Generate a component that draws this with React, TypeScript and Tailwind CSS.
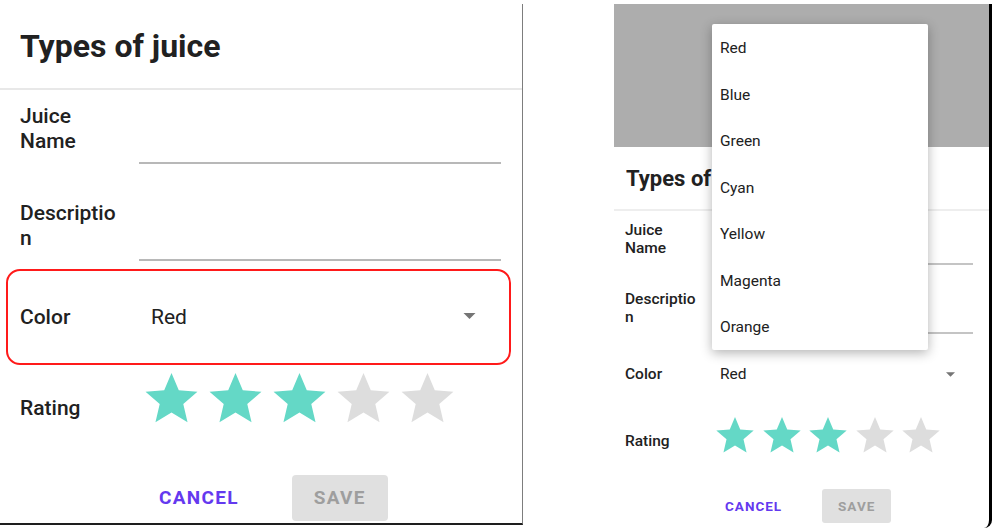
import React from "react";

const STAR_PATH =
  "M12 17.27L18.18 21l-1.64-7.03L22 9.24l-7.19-.61L12 2 9.19 8.63 2 9.24l5.46 4.73L5.82 21z";

const COLORS = ["Red", "Blue", "Green", "Cyan", "Yellow", "Magenta", "Orange"];

const Star = ({ on, className }: { on: boolean; className: string }) => (
  <svg viewBox="2 2 20 19.27" className={className}>
    <path d={STAR_PATH} fill={on ? "#64d8c6" : "#dddddd"} />
  </svg>
);

const Caret = ({ className }: { className: string }) => (
  <svg viewBox="0 0 10 5" className={className}>
    <polygon points="0,0 10,0 5,5" fill="#757575" />
  </svg>
);

const App = () => {
  return (
    <div className="w-[995px] h-[530px] bg-white pt-[4px] flex font-['Roboto',sans-serif] text-[#212121] overflow-hidden">
      {/* Zoomed dialog */}
      <div className="w-[523px] h-[521px] shrink-0 flex flex-col bg-white border-r border-r-[#7d7d7d] border-b-2 border-b-[#1e1e1e]">
        <div className="h-[86px] shrink-0 flex items-center pl-5 border-b-2 border-[#e8e8e8]">
          <h1 className="text-[32px] leading-9 font-bold">Types of juice</h1>
        </div>

        <div className="h-[74px] shrink-0 flex pl-5">
          <div className="w-[100px] pt-[14px] text-[21px] leading-[25px] font-medium [overflow-wrap:anywhere]">
            Juice Name
          </div>
          <div className="ml-[19px] mr-[21px] flex-1 border-b-2 border-[#b8b8b8]" />
        </div>

        <div className="h-[97px] shrink-0 flex pl-5">
          <div className="w-[100px] pt-[37px] text-[21px] leading-[25px] font-medium [overflow-wrap:anywhere]">
            Description
          </div>
          <div className="ml-[19px] mr-[21px] flex-1 border-b-2 border-[#b8b8b8]" />
        </div>

        <div className="mt-[8px] ml-[6px] mr-[11px] h-[96px] shrink-0 rounded-[14px] border-2 border-[#ff1a1a] flex items-center pl-3">
          <div className="w-[100px] text-[21px] leading-[25px] font-medium">Color</div>
          <div className="ml-[31px] flex-1 flex items-center justify-between pr-[33px]">
            <span className="text-[21px] leading-[25px]">Red</span>
            <Caret className="w-[13px] h-[6px] -mt-[3px]" />
          </div>
        </div>

        <div className="mt-[8px] flex items-start pl-5">
          <div className="w-[100px] pt-[23px] text-[21px] leading-[25px] font-medium">Rating</div>
          <div className="ml-[25px] flex gap-[11px]">
            {[1, 2, 3, 4, 5].map((n) => (
              <Star key={n} on={n <= 3} className="w-[53px] h-[50px]" />
            ))}
          </div>
        </div>

        <div className="mt-[52px] flex items-center pl-[159px]">
          <button className="text-[19px] font-bold tracking-[1.3px] text-[#6439ef]">CANCEL</button>
          <button className="ml-[53px] w-[96px] h-[46px] rounded-[4px] bg-[#e0e0e0] text-[19px] font-bold tracking-[1.3px] text-[#9e9e9e]">
            SAVE
          </button>
        </div>
      </div>

      {/* Phone with spinner open */}
      <div className="relative ml-[91px] w-[378px] h-[524px] shrink-0 flex flex-col bg-white border-r-[3px] border-black rounded-br-[8px]">
        <div className="h-[143px] shrink-0 bg-[#adadad]" />

        <div className="h-[64px] shrink-0 flex items-center pl-3 pt-[2px] border-b-2 border-[#eeeeee]">
          <div className="w-[86px] overflow-hidden whitespace-nowrap">
            <h2 className="text-[22px] leading-[26px] font-bold">Types of</h2>
          </div>
        </div>

        <div className="h-[54px] shrink-0 flex pl-[11px]">
          <div className="w-[72px] pt-[10px] text-[15.5px] leading-[18px] font-medium [overflow-wrap:anywhere]">
            Juice Name
          </div>
          <div className="ml-[15px] mr-[16px] flex-1 border-b-2 border-[#c4c4c4]" />
        </div>

        <div className="h-[69px] shrink-0 flex pl-[11px]">
          <div className="w-[72px] pt-[25px] text-[15.5px] leading-[18px] font-medium [overflow-wrap:anywhere]">
            Description
          </div>
          <div className="ml-[15px] mr-[16px] flex-1 border-b-2 border-[#c4c4c4]" />
        </div>

        <div className="mt-[31px] h-[18px] flex items-center pl-[11px]">
          <div className="w-[72px] text-[15.5px] leading-[18px] font-medium">Color</div>
          <div className="ml-[23px] flex-1 flex items-center justify-between pr-[34px]">
            <span className="text-[15.5px] leading-[18px]">Red</span>
            <Caret className="w-[9px] h-[5px]" />
          </div>
        </div>

        <div className="mt-[34px] flex items-start pl-[11px]">
          <div className="w-[72px] pt-[15px] text-[15.5px] leading-[18px] font-medium">Rating</div>
          <div className="ml-[19px] flex gap-[8.5px]">
            {[1, 2, 3, 4, 5].map((n) => (
              <Star key={n} on={n <= 3} className="w-[38px] h-[36px]" />
            ))}
          </div>
        </div>

        <div className="mt-[36px] flex items-center pl-[111px]">
          <button className="text-[13.5px] font-bold tracking-[1px] text-[#6439ef]">CANCEL</button>
          <button className="ml-[40px] w-[69px] h-[34px] rounded-[3px] bg-[#e0e0e0] text-[13.5px] font-bold tracking-[1px] text-[#9e9e9e]">
            SAVE
          </button>
        </div>

        {/* spinner dropdown */}
        <div className="absolute left-[98px] top-[20px] w-[216px] bg-white rounded-[2px] shadow-[0_3px_12px_rgba(0,0,0,0.3)]">
          {COLORS.map((c) => (
            <div key={c} className="h-[46.5px] flex items-center pl-2 pt-[3px] text-[15.5px]">
              {c}
            </div>
          ))}
        </div>
      </div>
    </div>
  );
};

export default App;
